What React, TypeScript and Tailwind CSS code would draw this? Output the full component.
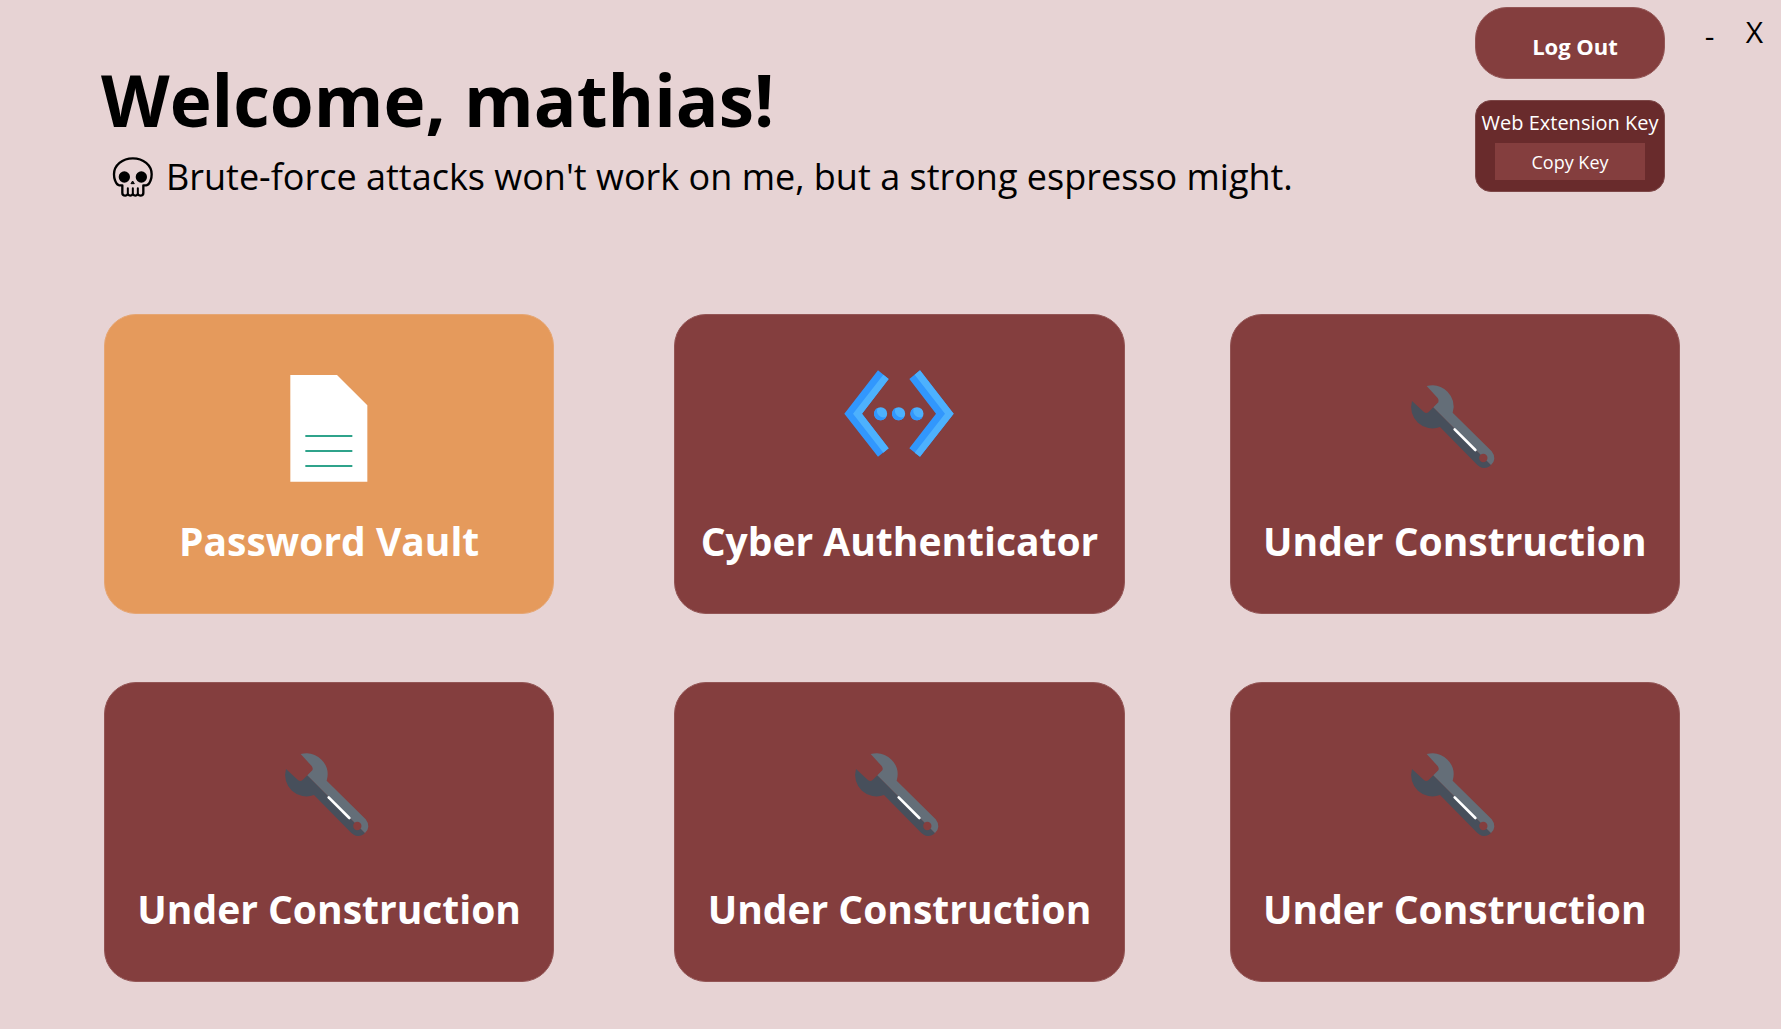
import type { ReactNode } from "react";

function SkullIcon() {
  return (
    <svg viewBox="37 33 126 126" className="size-[42px] shrink-0" fill="none" stroke="#000" strokeWidth="7" strokeLinecap="round" strokeLinejoin="round" aria-hidden="true">
      <path d="M68 121H59C50 120 49 112 46 106C44 101 43 95 43 88C43 61 68 40 99.500 40C131 40 156 61 156 88C156 95 155 101 153 106C150 112 149 120 140 121H131V144Q131 152 122 152Q118 152 114.500 148Q111 152 107 152Q103 152 99.500 148Q96 152 92 152Q88 152 84.500 148Q81 152 77 152Q68 152 68 144Z" />
      <path d="M84.500 130V148M99.500 130V148M114.500 130V148" strokeWidth="6" />
      <circle cx="74" cy="96" r="17" fill="#000" stroke="none" />
      <circle cx="125" cy="96" r="17" fill="#000" stroke="none" />
      <path d="M99.500 109L104 116H95Z" fill="#000" strokeWidth="3" />
    </svg>
  );
}

function DocumentIcon() {
  return (
    <svg viewBox="-1 24 360 360" className="size-[120px]" aria-hidden="true">
      <path d="M63 45H203L294 136V365H63Z" fill="#fff" />
      <path d="M108 228H249M108 273H249M108 318H249" stroke="#2fa38b" strokeWidth="6" />
    </svg>
  );
}

function CodeIcon() {
  return (
    <svg viewBox="29 39 360 360" className="size-[120px]" aria-hidden="true">
      <path d="M146 46L178 72L98 176L178 280L146 305L45 176Z" fill="#3197fd" />
      <path d="M162 59L178 72L98 176L178 280L162 293L71 176Z" fill="#4db1fd" />
      <path d="M272 46L240 72L320 176L240 280L272 305L373 176Z" fill="#3197fd" />
      <path d="M256 59L272 46L373 176L272 305L256 293L347 176Z" fill="#4db1fd" />
      {[154, 208, 263].map((x) => (
        <g key={x} transform={`translate(${x} 176)`}>
          <circle r="19.500" fill="#4db1fd" />
          <path d="M-9 -17A19.500 19.500 0 1 0 17 9A19.500 19.500 0 0 1 -9 -17Z" fill="#3197fd" />
        </g>
      ))}
    </svg>
  );
}

function WrenchIcon() {
  return (
    <svg viewBox="-1 -6 360 360" className="size-[120px]" aria-hidden="true">
      <path d="M50 93A64 64 0 0 0 134 171L241 280Q253 294 266 294Q279 294 287 285L114 112L99 127Q92 132 85 125Z" fill="#474f5b" />
      <path d="M94 48A64 64 0 0 1 172 128L289 244Q297 254 297 266Q296 277 287 285L114 112L129 97Q132 91 127 84Z" fill="#646e78" />
      <circle cx="264" cy="264" r="12.500" fill="#843e3e" />
      <path d="M178 178L240 240" stroke="#fff" strokeWidth="8" strokeLinecap="round" />
    </svg>
  );
}

type Tile = { label: string; icon: ReactNode; active?: boolean };

const tiles: Tile[] = [
  { label: "Password Vault", icon: <DocumentIcon />, active: true },
  { label: "Cyber Authenticator", icon: <CodeIcon /> },
  { label: "Under Construction", icon: <WrenchIcon /> },
  { label: "Under Construction", icon: <WrenchIcon /> },
  { label: "Under Construction", icon: <WrenchIcon /> },
  { label: "Under Construction", icon: <WrenchIcon /> },
];

function TileButton({ label, icon, active }: Tile) {
  return (
    <button
      type="button"
      className={`flex h-[300px] flex-col items-center rounded-[32px] border pt-[53px] nth-[3n+1]:mr-[15px] ${
        active ? "border-[#e6a673] bg-[#e59a5c]" : "border-[#935555] bg-[#843e3e]"
      }`}
    >
      {icon}
      <span className="mt-[23px] text-[39px] leading-[60px] font-bold whitespace-nowrap text-white">{label}</span>
    </button>
  );
}

export default function App() {
  return (
    <div className="min-h-screen bg-[#e7d3d4] pb-[47px] font-['Open_Sans','Noto_Sans',sans-serif] text-black">
      <header className="flex h-[314px] items-start pl-[101px]">
        <div className="min-w-0 flex-1 pt-[48px]">
          <h1 className="text-[71px] leading-[104px] font-bold whitespace-nowrap">Welcome, mathias!</h1>
          <p className="flex items-center pl-[11px] text-[36px] leading-[50px] whitespace-nowrap">
            <SkullIcon />
            <span className="ml-3">Brute-force attacks won't work on me, but a strong espresso might.</span>
          </p>
        </div>
        <div className="flex w-[190px] shrink-0 flex-col gap-[21px] pt-[7px]">
          <button type="button" className="h-[72px] rounded-[32px] border border-[#935555] bg-[#843e3e] pt-1.5 pl-2.5 text-[22px] font-bold text-white">
            Log Out
          </button>
          <section className="flex h-[92px] flex-col items-center rounded-2xl border border-[#7d4747] bg-[#692b2c] pt-1 text-white">
            <h2 className="pb-0.5 text-[20px] leading-[36px] whitespace-nowrap">Web Extension Key</h2>
            <button type="button" className="h-[37px] w-[150px] bg-[#843e3e] pt-0.5 text-[18px]">
              Copy Key
            </button>
          </section>
        </div>
        <div className="flex w-[116px] shrink-0 items-start pt-3 pl-[22px] text-[30px] leading-[40px]">
          <button type="button" aria-label="Minimize" className="w-[45px] pt-1">-</button>
          <button type="button" aria-label="Close" className="w-[45px]">X</button>
        </div>
      </header>
      <main className="grid grid-cols-[465fr_450fr_450fr] gap-x-[105px] gap-y-[68px] pr-[101px] pl-[104px]">
        {tiles.map((tile, i) => (
          <TileButton key={i} {...tile} />
        ))}
      </main>
    </div>
  );
}
